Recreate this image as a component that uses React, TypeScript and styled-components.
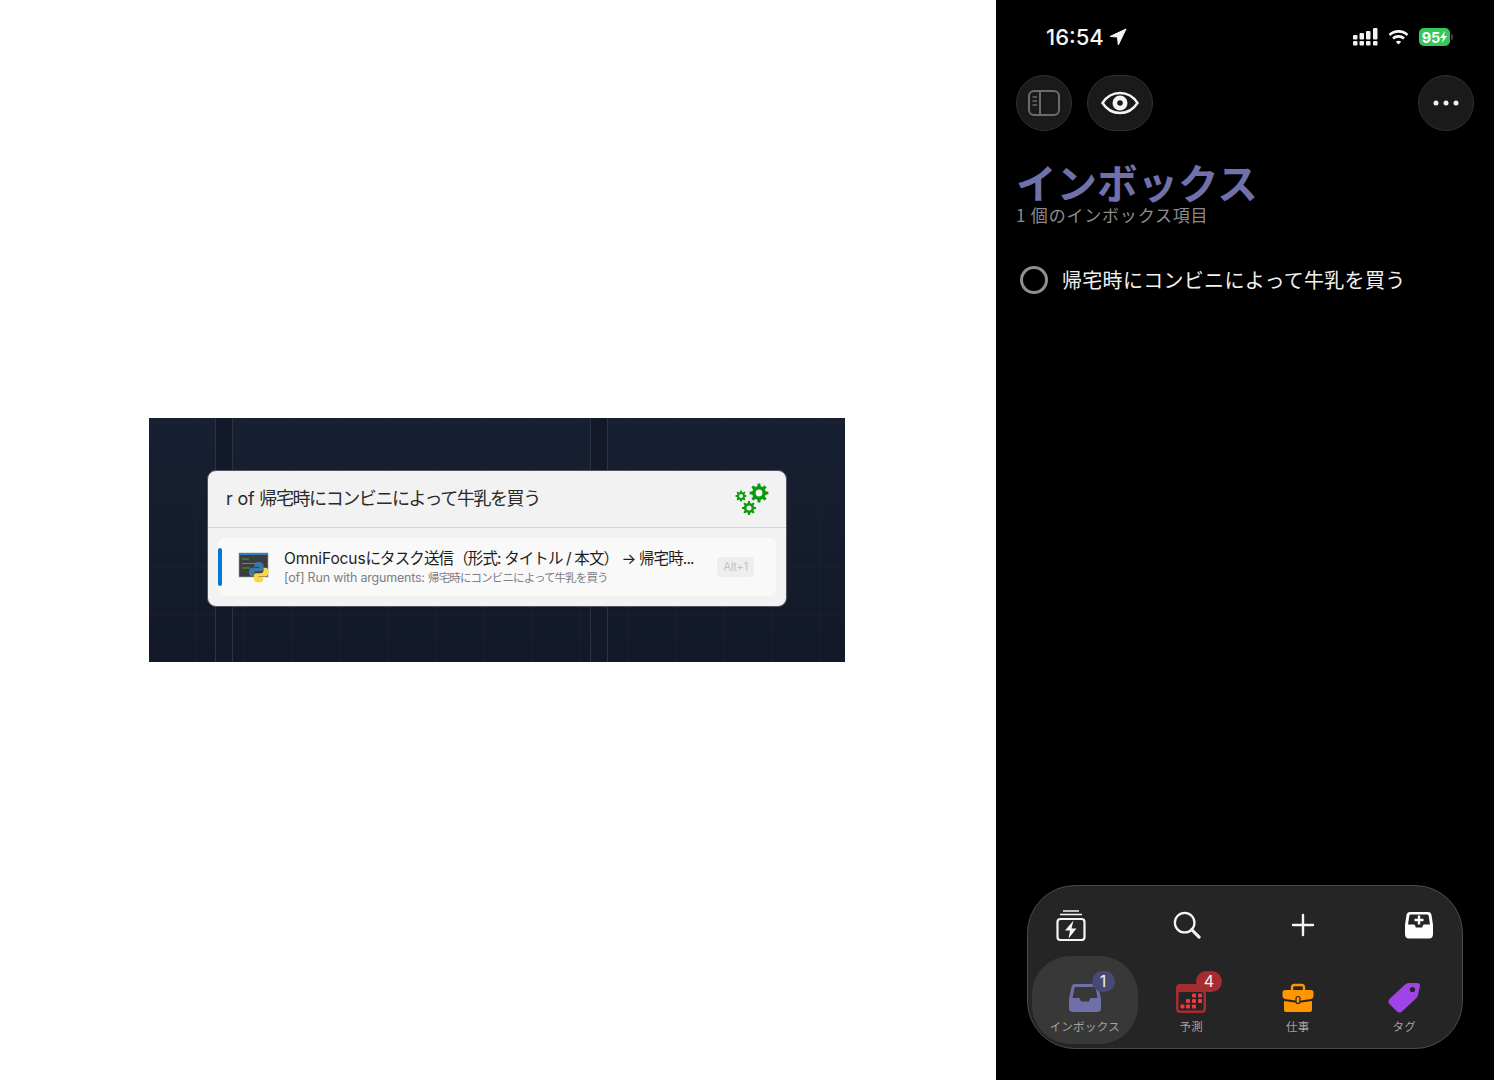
import React from "react";
import styled, { createGlobalStyle } from "styled-components";

const GlobalStyle = createGlobalStyle`
  html, body {
    margin: 0;
    padding: 0;
    background: #ffffff;
  }
  body {
    font-family: "Noto Sans CJK JP", "Noto Sans", sans-serif;
  }
`;

const Page = styled.div`
  display: flex;
  width: 1494px;
  height: 1080px;
  overflow: hidden;
`;

const LeftSide = styled.div`
  width: 996px;
  padding: 418px 0 0 149px;
  box-sizing: border-box;
  background: #fff;
`;

const Shot = styled.div`
  width: 696px;
  height: 244px;
  box-sizing: border-box;
  padding: 52px 58px 0;
  background-color: #151b2c;
  background-image:
    linear-gradient(90deg,
      transparent 66px, #2b3240 66px, #2b3240 67px, #131929 67px, #131929 83px, #2b3240 83px, #2b3240 84px, transparent 84px,
      transparent 441px, #2b3240 441px, #2b3240 442px, #131929 442px, #131929 458px, #2b3240 458px, #2b3240 459px, transparent 459px),
    repeating-linear-gradient(90deg, transparent 0 47px, #1a2030 47px 48px),
    repeating-linear-gradient(0deg, transparent 0 47px, #1a2030 47px 48px),
    linear-gradient(180deg, #172033 0%, #121827 100%);
`;

const Launcher = styled.div`
  width: 580px;
  height: 137px;
  box-sizing: border-box;
  border-radius: 9px;
  background: #f2f2f2;
  border: 1px solid #4f5560;
  font-family: Inter, "Noto Sans CJK JP", sans-serif;
`;

const SearchRow = styled.div`
  display: flex;
  align-items: center;
  justify-content: space-between;
  height: 56px;
  padding: 0 17px 0 18px;
  border-bottom: 1px solid #d4d4d4;
`;

const SearchText = styled.div`
  margin-top: -4px;
  font-size: 18px;
  letter-spacing: -1.42px;
  color: #2a2a2a;
  white-space: nowrap;
`;

const Latin = styled.span<{ $spacing: number; $size?: number }>`
  letter-spacing: ${(p) => p.$spacing}px;
  font-size: ${(p) => (p.$size ? `${p.$size}px` : "inherit")};
`;

const ResultRow = styled.div`
  display: flex;
  align-items: center;
  height: 58px;
  margin: 10px 10px 0;
  border-radius: 6px;
  background: #f9f9f9;
`;

const Accent = styled.div`
  width: 4px;
  height: 38px;
  border-radius: 2px;
  background: #0078d4;
`;

const ResultIcon = styled.svg`
  width: 32px;
  height: 32px;
  margin-left: 16px;
  flex: none;
`;

const ResultBody = styled.div`
  width: 433px;
  margin-left: 14px;
`;

const ResultTitle = styled.div`
  font-size: 15.5px;
  line-height: 21px;
  letter-spacing: -0.88px;
  color: #1d1d1d;
  white-space: nowrap;
`;

const ResultSub = styled.div`
  font-size: 11.5px;
  line-height: 17px;
  letter-spacing: -0.88px;
  color: #7d7d85;
  white-space: nowrap;
`;

const Shortcut = styled.div`
  width: 37px;
  height: 20px;
  border-radius: 4px;
  background: #eeeeee;
  color: #c4c4c4;
  font-size: 11.5px;
  line-height: 20px;
  text-align: center;
  letter-spacing: -0.4px;
`;

const Phone = styled.div`
  display: flex;
  flex-direction: column;
  width: 498px;
  height: 1080px;
  background: #000;
  color: #fff;
`;

const StatusBar = styled.div`
  display: flex;
  align-items: center;
  justify-content: space-between;
  height: 75px;
  padding: 0 41px 1px 50px;
  box-sizing: border-box;
`;

const Clock = styled.div`
  display: flex;
  align-items: center;
  gap: 5px;
  font-family: Inter, sans-serif;
  font-size: 22px;
  font-weight: 500;
  color: #f5f5f5;
`;

const StatusIcons = styled.div`
  display: flex;
  align-items: center;
  gap: 10px;
`;

const Battery = styled.div`
  display: flex;
  align-items: center;
  justify-content: center;
  width: 31px;
  height: 18px;
  border-radius: 5px;
  background: #34c759;
  color: #fff;
  font-family: Inter, sans-serif;
  font-size: 14.5px;
  font-weight: 700;
  letter-spacing: -0.2px;
`;

const BatteryWrap = styled.div`
  display: flex;
  align-items: center;
  gap: 1px;
  &::after {
    content: "";
    width: 2px;
    height: 6px;
    border-radius: 0 2px 2px 0;
    background: #444;
  }
`;

const ButtonRow = styled.div`
  display: flex;
  gap: 15px;
  padding: 0 20px;
`;

const RoundButton = styled.div<{ $wide?: boolean; $end?: boolean }>`
  display: flex;
  align-items: center;
  justify-content: center;
  width: ${(p) => (p.$wide ? "66px" : "56px")};
  height: 56px;
  box-sizing: border-box;
  margin-left: ${(p) => (p.$end ? "auto" : "0")};
  border-radius: 28px;
  background: #1a1a1a;
  border: 1px solid #303030;
`;

const Title = styled.h1`
  margin: 28px 0 0 20px;
  font-size: 40.5px;
  line-height: 46px;
  font-weight: 700;
  color: #7071aa;
  white-space: nowrap;
`;

const Subtitle = styled.div`
  margin-left: 20px;
  font-size: 17px;
  line-height: 20px;
  letter-spacing: 0.8px;
  color: #8c8c8e;
`;

const TaskRow = styled.div`
  display: flex;
  align-items: center;
  gap: 14px;
  margin: 41px 0 0 24px;
`;

const Check = styled.div`
  width: 28px;
  height: 28px;
  box-sizing: border-box;
  border-radius: 50%;
  border: 3px solid #8e8e93;
`;

const TaskText = styled.div`
  font-size: 20px;
  line-height: 28px;
  letter-spacing: 0.3px;
  color: #f2f2f2;
  white-space: nowrap;
`;

const Dock = styled.div`
  width: 436px;
  height: 164px;
  box-sizing: border-box;
  margin: auto 0 31px 31px;
  padding: 0 3.5px;
  border-radius: 48px;
  background: #252525;
  border: 1.5px solid #4a4a4a;
`;

const ToolRow = styled.div`
  display: flex;
  align-items: center;
  justify-content: space-between;
  height: 70px;
  padding: 8px 23px 0;
  box-sizing: border-box;
`;

const ToolSlot = styled.div`
  display: flex;
  align-items: center;
  justify-content: center;
  width: 32px;
  height: 32px;
`;

const TabRow = styled.div`
  display: grid;
  grid-template-columns: repeat(4, 106.5px);
`;

const Tab = styled.div<{ $active?: boolean }>`
  position: relative;
  display: flex;
  flex-direction: column;
  align-items: center;
  height: 88px;
  padding-top: 25px;
  box-sizing: border-box;
  border-radius: 38px;
  background: ${(p) => (p.$active ? "#383838" : "transparent")};
`;

const TabIcon = styled.svg`
  width: 34px;
  height: 34px;
  flex: none;
`;

const TabLabel = styled.div`
  margin-top: 3px;
  font-size: 11.5px;
  line-height: 16px;
  letter-spacing: 0.3px;
  color: #a3a3a3;
`;

const Badge = styled.div<{ $color: string; $left: number; $width: number }>`
  position: absolute;
  top: 15px;
  left: ${(p) => p.$left}px;
  width: ${(p) => p.$width}px;
  height: 21px;
  border-radius: 11px;
  background: ${(p) => p.$color};
  color: #f2f2f2;
  font-family: Inter, sans-serif;
  font-size: 16px;
  line-height: 21px;
  text-align: center;
`;

const gearPoints = (cx: number, cy: number, r: number, teeth: number) => {
  const pts: string[] = [];
  const step = (Math.PI * 2) / teeth;
  for (let i = 0; i < teeth; i++) {
    const a = i * step;
    const corners: [number, number][] = [
      [-0.32, 0.72],
      [-0.18, 1],
      [0.18, 1],
      [0.32, 0.72],
    ];
    corners.forEach(([t, k]) => {
      const x = cx + Math.cos(a + t * step) * r * k;
      const y = cy + Math.sin(a + t * step) * r * k;
      pts.push(`${x.toFixed(2)},${y.toFixed(2)}`);
    });
  }
  return pts.join(" ");
};

const Gear: React.FC<{ cx: number; cy: number; r: number }> = ({ cx, cy, r }) => (
  <g>
    <polygon points={gearPoints(cx, cy, r, 8)} fill="#0a9b0a" />
    <circle cx={cx} cy={cy} r={r * 0.36} fill="#f2f2f2" />
  </g>
);

const App: React.FC = () => (
  <Page>
    <GlobalStyle />
    <LeftSide>
      <Shot>
        <Launcher>
          <SearchRow>
            <SearchText>
              <Latin $spacing={-0.2}>r of </Latin>
              帰宅時にコンビニによって牛乳を買う
            </SearchText>
            <svg width="34" height="32" viewBox="0 0 34 32">
              <Gear cx={24} cy={10} r={9.5} />
              <Gear cx={6} cy={13} r={5.6} />
              <Gear cx={14} cy={25} r={7} />
            </svg>
          </SearchRow>
          <ResultRow>
            <Accent />
            <ResultIcon viewBox="0 0 32 32">
              <rect x="1" y="2" width="29" height="24" fill="#3d3d3d" stroke="#9aa0a6" strokeWidth="0.6" />
              <rect x="1" y="2" width="29" height="2" fill="#2f7fc1" />
              <path d="M4 8h7M4 12.5h14M4 17h8" stroke="#3fa535" strokeWidth="1.2" />
              <g transform="translate(11 11) scale(0.97)">
                <path
                  d="M10 0C5 0 5.500 2 5.500 3.500V5H10.500V6H3C1 6 0 8 0 10.500S1 15 3 15H5V12.500C5 10.500 6.500 9.500 8 9.500H12.500C14 9.500 15 8.500 15 7V3.500C15 1.500 13 0 10 0Z"
                  fill="#3c77aa"
                />
                <path
                  d="M10 0C5 0 5.500 2 5.500 3.500V5H10.500V6H3C1 6 0 8 0 10.500S1 15 3 15H5V12.500C5 10.500 6.500 9.500 8 9.500H12.500C14 9.500 15 8.500 15 7V3.500C15 1.500 13 0 10 0Z"
                  fill="#fbd548"
                  transform="rotate(180 10 10.500)"
                />
              </g>
            </ResultIcon>
            <ResultBody>
              <ResultTitle>
                <Latin $spacing={-0.1}>OmniFocus</Latin>にタスク送信（形式: タイトル / 本文） → 帰宅時...
              </ResultTitle>
              <ResultSub>
                <Latin $spacing={-0.2} $size={12.5}>[of] Run with arguments: </Latin>
                帰宅時にコンビニによって牛乳を買う
              </ResultSub>
            </ResultBody>
            <Shortcut>Alt+1</Shortcut>
          </ResultRow>
        </Launcher>
      </Shot>
    </LeftSide>
    <Phone>
      <StatusBar>
        <Clock>
          16:54
          <svg width="18" height="18" viewBox="0 0 18 18">
            <path d="M17 1 1 8.500l7.500.5.800 8z" fill="#f5f5f5" stroke="#f5f5f5" strokeLinejoin="round" />
          </svg>
        </Clock>
        <StatusIcons>
          <svg width="25" height="18" viewBox="0 0 25 18" fill="#f2f2f2">
            <rect x="0" y="7" width="4.500" height="4.500" rx="1" />
            <rect x="0" y="13" width="4.500" height="4.500" rx="1" />
            <rect x="6.500" y="5" width="4.500" height="6.500" rx="1" />
            <rect x="6.500" y="13" width="4.500" height="4.500" rx="1" />
            <rect x="13" y="3" width="4.500" height="8.500" rx="1" />
            <rect x="13" y="13" width="4.500" height="4.500" rx="1" />
            <rect x="20" y="0" width="4.500" height="11.500" rx="1" />
            <rect x="20" y="13" width="4.500" height="4.500" rx="1" />
          </svg>
          <svg width="21" height="17" viewBox="0 0 21 16" fill="none" stroke="#f5f5f5" strokeWidth="2.600">
            <path d="M1.500 5.500c5-4.800 13-4.800 18 0" />
            <path d="M5 9c3-2.800 8-2.800 11 0" />
            <path d="M10.500 15 7.800 12.300c1.500-1.300 3.900-1.300 5.400 0z" fill="#f5f5f5" stroke="none" />
          </svg>
          <BatteryWrap>
            <Battery>
              95
              <svg width="7" height="12" viewBox="0 0 7 12">
                <path d="M5 0 0 7h3l-1 5 5-7H4z" fill="#fff" />
              </svg>
            </Battery>
          </BatteryWrap>
        </StatusIcons>
      </StatusBar>
      <ButtonRow>
        <RoundButton>
          <svg width="32" height="26" viewBox="0 0 32 26" fill="none" stroke="#6b6b6b" strokeWidth="2">
            <rect x="1" y="1" width="30" height="24" rx="5" />
            <path d="M12 1v24" />
            <path d="M4.500 7H9M4.500 11H9M4.500 15H9" strokeWidth="1.500" />
          </svg>
        </RoundButton>
        <RoundButton $wide>
          <svg width="38" height="24" viewBox="0 0 38 24" fill="none">
            <path
              d="M1.500 12C6 5 12 2 19 2s13 3 17.500 10C32 19 26 22 19 22S6 19 1.500 12z"
              stroke="#f5f5f5"
              strokeWidth="2.400"
            />
            <circle cx="19" cy="12" r="7.500" fill="#f5f5f5" />
            <circle cx="19" cy="12" r="2.800" fill="#1a1a1a" />
          </svg>
        </RoundButton>
        <RoundButton $end>
          <svg width="26" height="6" viewBox="0 0 26 6" fill="#f0f0f0">
            <circle cx="3" cy="3" r="2.500" />
            <circle cx="13" cy="3" r="2.500" />
            <circle cx="23" cy="3" r="2.500" />
          </svg>
        </RoundButton>
      </ButtonRow>
      <Title>インボックス</Title>
      <Subtitle>1 個のインボックス項目</Subtitle>
      <TaskRow>
        <Check />
        <TaskText>帰宅時にコンビニによって牛乳を買う</TaskText>
      </TaskRow>
      <Dock>
        <ToolRow>
          <ToolSlot>
            <svg width="32" height="32" viewBox="0 0 32 32" fill="none" stroke="#f5f5f5" strokeWidth="2.200">
              <path d="M8 2h16M5 5.500h22" strokeWidth="1.600" />
              <rect x="2.500" y="10" width="27" height="21" rx="3" />
              <path d="M18.500 11.500 10 21.500h5L13.500 29.500l8-10h-5z" fill="#f5f5f5" stroke="none" />
            </svg>
          </ToolSlot>
          <ToolSlot>
            <svg width="28" height="28" viewBox="0 0 30 30" fill="none" stroke="#f5f5f5">
              <circle cx="12.500" cy="12.500" r="10.500" strokeWidth="2.400" />
              <path d="M20 20l8 8" strokeWidth="3.200" strokeLinecap="round" />
            </svg>
          </ToolSlot>
          <ToolSlot>
            <svg width="24" height="24" viewBox="0 0 24 24" stroke="#f5f5f5" strokeWidth="2.400" strokeLinecap="round">
              <path d="M12 2v20M2 12h20" />
            </svg>
          </ToolSlot>
          <ToolSlot>
            <svg width="30" height="28" viewBox="0 0 30 28">
              <path
                d="M6 1h18c2 0 3 1 3.500 3L29 14v9c0 3-1.500 4.500-4 4.500H5c-2.500 0-4-1.500-4-4.500v-9L2.500 4C3 2 4 1 6 1z"
                fill="#fff"
              />
              <path
                d="M7 3.500h16c1 0 1.500.5 1.700 1.500L26 13.500h-5.500c-1 0-1.500.5-1.800 1.500l-.5 1.500h-6.400l-.5-1.500c-.3-1-.8-1.500-1.800-1.500H4L5.300 5C5.500 4 6 3.500 7 3.500z"
                fill="#252525"
              />
              <path d="M15 4.500v9M10.500 9h9" stroke="#fff" strokeWidth="2.400" />
            </svg>
          </ToolSlot>
        </ToolRow>
        <TabRow>
          <Tab $active>
            <TabIcon viewBox="0 0 34 34">
              <path
                d="M7 3h20c2 0 3 1 3.500 3L33 18v9c0 3-1.500 4-4 4H5c-2.500 0-4-1-4-4v-9L3.500 6C4 4 5 3 7 3z"
                fill="#6f70a8"
              />
              <path
                d="M8 6h18c1 0 1.500.5 1.700 1.500L29.500 17h-6c-1 0-1.500.5-1.800 1.500l-.7 2h-8l-.7-2c-.3-1-.8-1.500-1.800-1.500h-6L6.300 7.500C6.500 6.500 7 6 8 6z"
                fill="#383838"
              />
            </TabIcon>
            <TabLabel>インボックス</TabLabel>
            <Badge $color="#474a74" $left={60} $width={23}>1</Badge>
          </Tab>
          <Tab>
            <TabIcon viewBox="0 0 34 34">
              <rect x="2" y="3" width="30" height="29" rx="4" fill="#a52c30" />
              <rect x="4.500" y="11" width="25" height="18.500" rx="2" fill="#252525" />
              <g fill="#f0393d">
                <rect x="18" y="12.500" width="4" height="4" rx="1" />
                <rect x="24" y="12.500" width="4" height="4" rx="1" />
                <rect x="12" y="18" width="4" height="4" rx="1" />
                <rect x="18" y="18" width="4" height="4" rx="1" />
                <rect x="24" y="18" width="4" height="4" rx="1" />
                <rect x="6.500" y="23.500" width="4" height="4" rx="1" />
                <rect x="12" y="23.500" width="4" height="4" rx="1" />
                <rect x="18" y="23.500" width="4" height="4" rx="1" />
              </g>
            </TabIcon>
            <TabLabel>予測</TabLabel>
            <Badge $color="#a52c30" $left={58} $width={26}>4</Badge>
          </Tab>
          <Tab>
            <TabIcon viewBox="0 0 34 34">
              <path d="M11 10V6.500C11 5 12 4 13.500 4h7C22 4 23 5 23 6.500V10" fill="none" stroke="#ff9500" strokeWidth="2.400" />
              <path d="M4 9h26c1.500 0 2.500 1 2.500 2.500V15c0 1.500-1 2.500-2.500 3l-10 1.500h-6L4 18c-1.500-.5-2.500-1.500-2.500-3v-3.500C1.500 10 2.500 9 4 9z" fill="#ff9500" />
              <path d="M3 20l11 1.500h6L31 20v8.500c0 2-1 2.500-2.500 2.500h-23C4 31 3 30.500 3 28.500z" fill="#ff9500" />
              <rect x="15" y="15.500" width="4" height="7" rx="2" fill="#ff9500" stroke="#252525" strokeWidth="1.200" />
            </TabIcon>
            <TabLabel>仕事</TabLabel>
          </Tab>
          <Tab>
            <TabIcon viewBox="0 0 34 34">
              <path
                d="M22 2h8c2 0 3 1 3 3l-2 9c-.3 1.500-1 2.600-2 3.600L15 30.500c-1.500 1.400-3.500 1.400-5 0L2.500 23c-1.400-1.500-1.400-3.500 0-5L17 4.500C18.500 3 20 2 22 2z"
                fill="#a044e8"
              />
              <circle cx="25.500" cy="8.500" r="2.600" fill="#252525" />
            </TabIcon>
            <TabLabel>タグ</TabLabel>
          </Tab>
        </TabRow>
      </Dock>
    </Phone>
  </Page>
);

export default App;
